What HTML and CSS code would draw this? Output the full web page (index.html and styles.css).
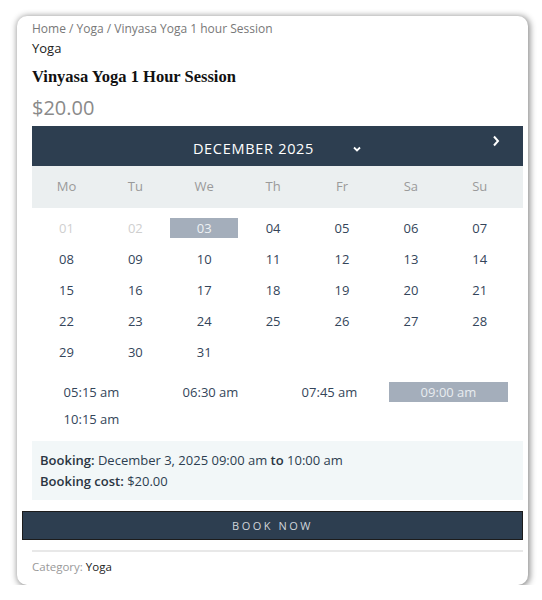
FILE: index.html
```html
<!DOCTYPE html>
<html>
<head>
<meta charset="utf-8">
<link rel="stylesheet" href="styles.css">
</head>
<body>
<div class="page">
  <div class="card">
    <div class="crumbs">Home / Yoga / Vinyasa Yoga 1 hour Session</div>
    <div class="crumb-cat">Yoga</div>
    <h1 class="title">Vinyasa Yoga 1 Hour Session</h1>
    <div class="price">$20.00</div>

    <div class="cal">
      <div class="cal-head">
        <span class="month">DECEMBER 2025</span>
        <svg class="caret" width="10" height="8" viewBox="0 0 10 8"><path d="M2 2.5 L5 5.5 L8 2.5" fill="none" stroke="#fff" stroke-width="1.8"/></svg>
        <svg class="next" width="8" height="12" viewBox="0 0 8 12"><path d="M2 1.5 L6 6 L2 10.5" fill="none" stroke="#fff" stroke-width="2"/></svg>
      </div>
      <div class="weekdays">
        <span>Mo</span><span>Tu</span><span>We</span><span>Th</span><span>Fr</span><span>Sa</span><span>Su</span>
      </div>
      <div class="days">
        <span class="day past"><i>01</i></span><span class="day past"><i>02</i></span><span class="day sel"><i>03</i></span><span class="day"><i>04</i></span><span class="day"><i>05</i></span><span class="day"><i>06</i></span><span class="day"><i>07</i></span>
        <span class="day"><i>08</i></span><span class="day"><i>09</i></span><span class="day"><i>10</i></span><span class="day"><i>11</i></span><span class="day"><i>12</i></span><span class="day"><i>13</i></span><span class="day"><i>14</i></span>
        <span class="day"><i>15</i></span><span class="day"><i>16</i></span><span class="day"><i>17</i></span><span class="day"><i>18</i></span><span class="day"><i>19</i></span><span class="day"><i>20</i></span><span class="day"><i>21</i></span>
        <span class="day"><i>22</i></span><span class="day"><i>23</i></span><span class="day"><i>24</i></span><span class="day"><i>25</i></span><span class="day"><i>26</i></span><span class="day"><i>27</i></span><span class="day"><i>28</i></span>
        <span class="day"><i>29</i></span><span class="day"><i>30</i></span><span class="day"><i>31</i></span>
      </div>
    </div>

    <div class="times">
      <span class="slot">05:15 am</span>
      <span class="slot">06:30 am</span>
      <span class="slot">07:45 am</span>
      <span class="slot sel">09:00 am</span>
      <span class="slot">10:15 am</span>
    </div>

    <div class="summary">
      <div><b>Booking:</b> December 3, 2025 09:00 am <b>to</b> 10:00 am</div>
      <div><b>Booking cost:</b> $20.00</div>
    </div>

    <button class="book">BOOK NOW</button>

    <div class="meta"><span class="meta-label">Category:</span> <span class="meta-val">Yoga</span></div>
  </div>
</div>
</body>
</html>
```
FILE: styles.css
```css
* { box-sizing: border-box; }
body {
  margin: 0;
  background: #fff;
  font-family: "Open Sans", "DejaVu Sans", sans-serif;
  color: #2d3e50;
}
.page { padding: 16px 0 0 17px; }
.card {
  width: 511px;
  height: 569px;
  border-radius: 10px;
  background: #fff;
  box-shadow: 1px 1px 6px 1px rgba(0,0,0,0.45);
  padding: 4px 5px 0 15px;
}
.crumbs {
  font-size: 12px;
  line-height: 18px;
  color: #787878;
}
.crumb-cat {
  font-size: 13px;
  line-height: 20px;
  color: #222;
}
.title {
  margin: 6px 0 0;
  font-family: "Liberation Serif", "DejaVu Serif", serif;
  font-weight: bold;
  font-size: 16.5px;
  line-height: 26px;
  color: #111;
}
.price {
  margin-top: 4px;
  font-size: 20px;
  line-height: 28px;
  color: #8a8a8a;
}
.cal { margin-top: 4px; }
.cal-head {
  height: 40px;
  background: #2d3e50;
  display: flex;
  align-items: center;
  justify-content: center;
  position: relative;
  padding-top: 4px;
}
.month {
  color: #fff;
  font-size: 14.5px;
  letter-spacing: 0.7px;
}
.caret {
  margin-left: 38px;
  margin-top: 1px;
}
.next {
  position: absolute;
  left: 460px;
  top: 9px;
}
.weekdays {
  height: 42px;
  padding-bottom: 3px;
  background: #ebeff0;
  display: grid;
  grid-template-columns: repeat(7, 68.9px);
  align-items: center;
  font-size: 13px;
  color: #9a9a9a;
}
.weekdays span { text-align: center; }
.days {
  display: grid;
  grid-template-columns: repeat(7, 68.9px);
  grid-auto-rows: 31px;
  padding-top: 4px;
  font-size: 13px;
}
.day {
  display: flex;
  align-items: center;
  justify-content: center;
}
.day i {
  font-style: normal;
  width: 68px;
  height: 20px;
  line-height: 20px;
  text-align: center;
  color: #34455a;
}
.day.past i { color: #cfcfcf; }
.day.sel i { background: #a4aebb; color: #eef1f4; }
.times {
  display: grid;
  grid-template-columns: repeat(4, 119px);
  grid-auto-rows: 27px;
  padding-top: 11px;
  font-size: 13px;
}
.slot {
  display: flex;
  align-items: center;
  justify-content: center;
  color: #34455a;
}
.slot.sel {
  background: #a4aebb;
  color: #e8ecf0;
  height: 20px;
  align-self: center;
}
.summary {
  margin-top: 9px;
  height: 59px;
  background: #f2f7f8;
  padding: 9px 8px;
  font-size: 13px;
  line-height: 21px;
  color: #2d3e50;
}
.summary b { font-weight: 600; color: #2a3542; }
.book {
  display: block;
  margin: 11px 0 0 -10px;
  width: 501px;
  height: 29px;
  background: #2d3e50;
  border: 1px solid #1c1c1c;
  color: #d0d5da;
  font-family: inherit;
  font-size: 11px;
  letter-spacing: 2.5px;
  padding: 0;
}
.meta {
  margin-top: 10px;
  border-top: 2px solid #e8e8e8;
  padding-top: 6px;
  font-size: 11.5px;
  line-height: 18px;
}
.meta-label { color: #999; }
.meta-val { color: #222; }
```
